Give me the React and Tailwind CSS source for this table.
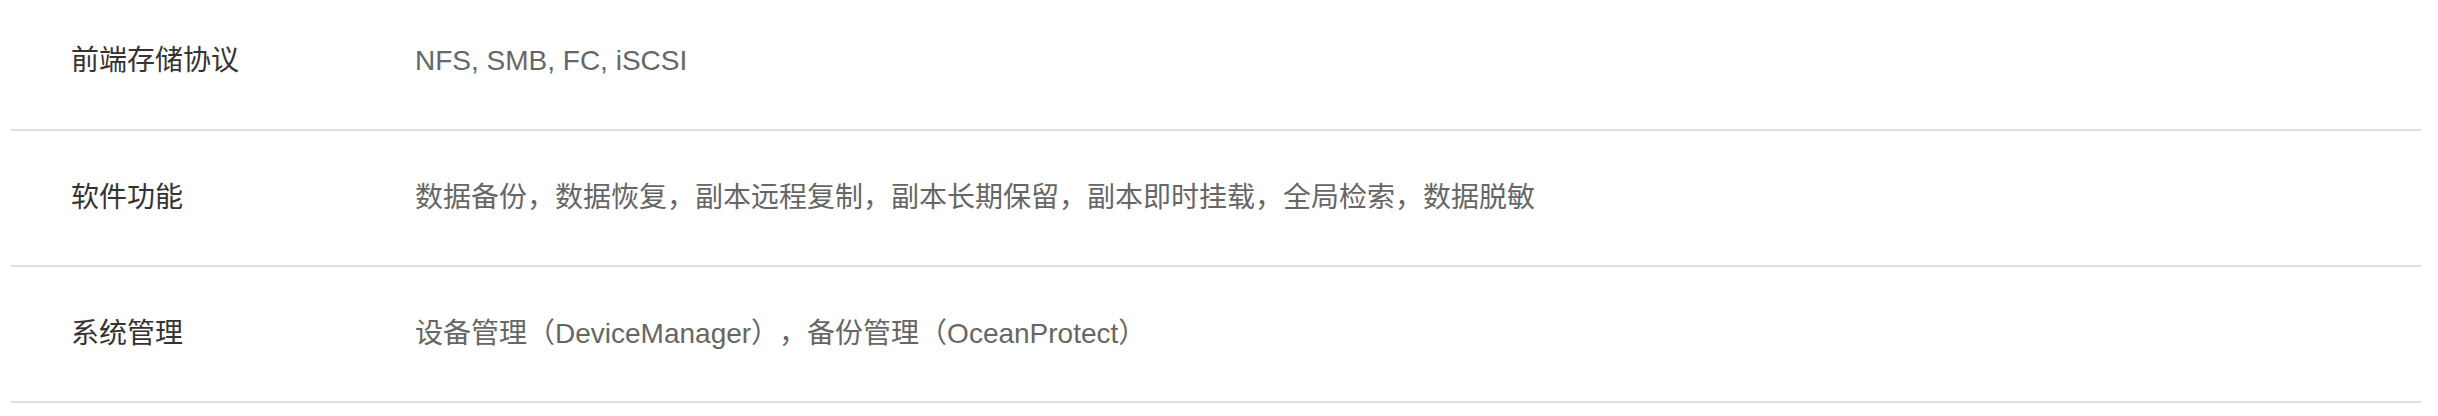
import React from 'react';

const rows = [
  { label: '前端存储协议', value: 'NFS, SMB, FC, iSCSI' },
  { label: '软件功能', value: '数据备份，数据恢复，副本远程复制，副本长期保留，副本即时挂载，全局检索，数据脱敏' },
  { label: '系统管理', value: '设备管理（DeviceManager），备份管理（OceanProtect）' },
];

const App = () => {
  return (
    <div
      className="w-full h-[416px] bg-white overflow-hidden [text-spacing-trim:space-all]"
      style={{ fontFamily: '"Liberation Sans", "Noto Sans CJK SC", sans-serif' }}
    >
      <div className="ml-[11px] w-[2410px]">
        {rows.map((row, i) => (
          <div
            key={row.label}
            className={`flex items-center border-b-2 border-[#dedede] text-[28px] leading-none ${
              i === 0 ? 'h-[131px] pb-[7px]' : 'h-[136px]'
            }`}
          >
            <div className="w-[404px] pl-[60px] text-[#333333]">{row.label}</div>
            <div className="text-[#666666]">{row.value}</div>
          </div>
        ))}
      </div>
    </div>
  );
};

export default App;
